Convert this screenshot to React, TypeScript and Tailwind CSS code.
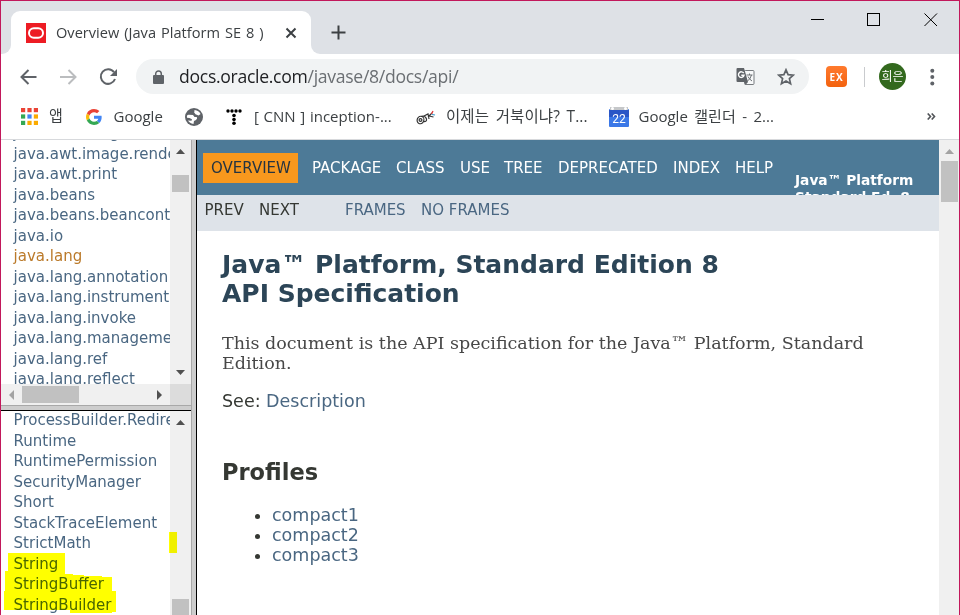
import type { ReactNode } from "react";

const UI = "font-['Open_Sans','Noto_Sans_CJK_KR',sans-serif]";

function Arrow({ dir, color = "#505050" }: { dir: "up" | "down" | "left" | "right"; color?: string }) {
  const d = {
    up: "M0 5 L4.5 0 L9 5Z",
    down: "M0 0 H9 L4.5 5Z",
    left: "M5 0 V10 L0 5Z",
    right: "M0 0 V10 L5 5Z",
  }[dir];
  return (
    <svg width={dir === "up" || dir === "down" ? 9 : 5} height={dir === "up" || dir === "down" ? 5 : 10} className="block shrink-0">
      <path d={d} fill={color} />
    </svg>
  );
}

function TabStrip() {
  return (
    <div className="flex h-[53px] shrink-0 bg-[#dee1e6]">
      <div className="flex w-[10px] items-end bg-white">
        <div className="h-full w-full rounded-br-[9px] bg-[#dee1e6]" />
      </div>
      <div className="flex flex-col bg-[#dee1e6] pt-[10px]">
        <div className="flex h-[43px] w-[300px] items-center rounded-t-[9px] bg-white pl-[15px]">
          <svg width="20" height="20" className="shrink-0">
            <rect width="20" height="20" fill="#ed1c24" />
            <rect x="3" y="5.2" width="14" height="9.6" rx="4.8" fill="none" stroke="#fff" strokeWidth="2" />
          </svg>
          <span className="ml-[10px] w-[220px] whitespace-nowrap text-[14.6px] leading-5 text-[#3c4043] [word-spacing:1.2px] -mt-px">Overview (Java Platform SE 8 )</span>
          <svg width="12" height="12" className="ml-[9px] shrink-0" stroke="#3c4043" strokeWidth="2">
            <path d="M1.5 1.5 L10.5 10.5 M10.5 1.5 L1.5 10.5" />
          </svg>
        </div>
      </div>
      <div className="flex w-[60px] bg-white">
        <div className="flex h-full w-full rounded-bl-[9px] bg-[#dee1e6] pl-[20px] pt-[24px]">
          <svg width="15" height="15" stroke="#3c4043" strokeWidth="2">
            <path d="M7.5 0.5 V14.5 M0.5 7.5 H14.5" />
          </svg>
        </div>
      </div>
      <div className="ml-auto flex pt-[12px] pr-[21px]">
        <svg width="127" height="14" fill="none" stroke="#000" strokeWidth="1">
          <path d="M0 6.5 H13" />
          <rect x="56.5" y="0.5" width="12" height="12" />
          <path d="M113.5 0.5 L126 13 M126 0.5 L113.5 13" />
        </svg>
      </div>
    </div>
  );
}

function Toolbar() {
  return (
    <div className="flex h-[46px] shrink-0 items-center bg-white pb-px pl-[19px]">
      <svg width="17" height="16" fill="none" stroke="#5f6368" strokeWidth="2">
        <path d="M16.5 8 H2 M8.5 1 L1.5 8 L8.5 15" />
      </svg>
      <svg width="17" height="16" fill="none" stroke="#bbbdbf" strokeWidth="2" className="ml-[23px]">
        <path d="M0 8 H15 M8.5 1 L15.5 8 L8.5 15" />
      </svg>
      <svg width="19" height="18" viewBox="0 0 19 18" fill="none" className="ml-[22px]">
        <path d="M15 4.2 A7.3 7.3 0 1 0 16 11" stroke="#5f6368" strokeWidth="2" />
        <path d="M18 1 V8 H11Z" fill="#5f6368" />
      </svg>
      <div className="ml-[18px] flex h-[35px] w-[673px] items-center rounded-full bg-[#f1f3f4] pl-[17px] pr-[14px]">
        <svg width="11" height="14" className="shrink-0">
          <rect y="5" width="11" height="9" rx="1" fill="#5f6368" />
          <path d="M2.7 6 V3.7 a2.8 2.8 0 0 1 5.6 0 V6" fill="none" stroke="#5f6368" strokeWidth="1.5" />
        </svg>
        <span className="-mt-[2px] ml-[15px] whitespace-nowrap text-[17.6px] leading-6 tracking-[-0.3px] text-[#202124]">
          docs.oracle.com<span className="text-[#6b6f73]">/javase/8/docs/api/</span>
        </span>
        <svg width="19" height="19" viewBox="0 0 19 19" className="ml-auto shrink-0">
          <rect x="8.5" y="3.5" width="9.5" height="14" rx="1" fill="#f8f9fa" stroke="#777b7f" />
          <path d="M1.5 1 H8 L12 15 H1.5 Q0.5 15 0.5 14 V2 Q0.5 1 1.5 1Z" fill="#5f6368" />
          <path d="M7.7 6.2 A2.8 2.8 0 1 0 8 8.3 H5.3" fill="none" stroke="#fff" strokeWidth="1.4" />
          <path d="M10.5 8 H16.5 M13.5 6.5 V8 M15.5 8 Q14.5 12 11.5 14 M12 9.5 Q13 12 16 14" fill="none" stroke="#6b6f73" />
          <path d="M8.5 15 H12 L9.5 18Z" fill="#5f6368" />
        </svg>
        <svg width="18" height="18" viewBox="0 0 18 18" className="ml-[22px] shrink-0">
          <path d="M9 1.8 L11.1 6.7 L16.3 7.1 L12.4 10.6 L13.6 15.8 L9 13 L4.4 15.8 L5.6 10.6 L1.7 7.1 L6.9 6.7Z" fill="none" stroke="#5f6368" strokeWidth="1.7" />
        </svg>
      </div>
      <div className="ml-[17px] flex h-[21px] w-[21px] items-center justify-center rounded-[4px] bg-linear-to-b from-[#ff7a2d] to-[#f3620c]">
        <span className="text-[10px] font-bold leading-none tracking-[0.8px] text-white">EX</span>
      </div>
      <div className="ml-[17px] h-[20px] w-px bg-[#c9cbce]" />
      <div className="ml-[14px] flex h-[27px] w-[27px] items-center justify-center rounded-full bg-[#33691e]">
        <span className="whitespace-nowrap text-[12px] leading-none text-white">희은</span>
      </div>
      <svg width="5" height="18" fill="#5f6368" className="ml-[24px]">
        <circle cx="2.3" cy="2.7" r="2" />
        <circle cx="2.3" cy="9" r="2" />
        <circle cx="2.3" cy="15.4" r="2" />
      </svg>
    </div>
  );
}

function Bookmark({ icon, children, className }: { icon: ReactNode; children?: ReactNode; className: string }) {
  return (
    <div className={`flex shrink-0 items-center whitespace-nowrap text-[15px] leading-5 text-[#3c4043] ${className}`}>
      {icon}
      {children}
    </div>
  );
}

const appColors = ["#ea4335", "#ea4335", "#ea4335", "#34a853", "#4285f4", "#fbab00", "#34a853", "#fbab00", "#fbab00"];

function Bookmarks() {
  return (
    <div className="flex h-[40px] shrink-0 items-center border-b border-[#d7d9dc] bg-white pb-[6px] pl-[20px]">
      <Bookmark
        className="w-[65px]"
        icon={
          <svg width="17" height="17">
            {appColors.map((c, i) => (
              <rect key={i} x={(i % 3) * 6.4} y={Math.floor(i / 3) * 6.4} width="4.2" height="4.2" fill={c} />
            ))}
          </svg>
        }
      >
        <span className="-mt-[3px] ml-[11px]">앱</span>
      </Bookmark>
      <Bookmark
        className="w-[99px]"
        icon={
          <svg width="16" height="16" viewBox="0 0 48 48">
            <path fill="#EA4335" d="M24 9.5c3.5 0 6.7 1.2 9.2 3.6l6.9-6.9C35.9 2.4 30.5 0 24 0 14.6 0 6.5 5.4 2.6 13.2l8 6.2C12.4 13.7 17.7 9.5 24 9.5z" />
            <path fill="#4285F4" d="M47 24.6c0-1.6-.2-3.1-.4-4.6H24v9h12.900c-.6 3-2.200 5.500-4.700 7.200l7.700 6C44.400 38 47 31.800 47 24.600z" />
            <path fill="#FBBC05" d="M10.5 28.6c-.5-1.5-.8-3-.8-4.6s.3-3.1.8-4.6l-8-6.2C.9 16.5 0 20.1 0 24s.9 7.5 2.6 10.8l7.9-6.2z" />
            <path fill="#34A853" d="M24 48c6.500 0 11.900-2.100 15.900-5.800l-7.700-6c-2.200 1.500-4.900 2.300-8.200 2.300-6.300 0-11.600-4.200-13.500-9.900l-8 6.200C6.500 42.600 14.600 48 24 48z" />
          </svg>
        }
      >
        <span className="-mt-[2px] ml-[11.5px]">Google</span>
      </Bookmark>
      <Bookmark
        className="w-[41px]"
        icon={
          <svg width="18" height="18" viewBox="0 0 18 18">
            <circle cx="9" cy="9" r="9" fill="#5f6368" />
            <path d="M9.5 1.9 Q14 2.5 15.6 6 L13.5 7.5 L10.5 6.2 L9.3 4.5Z" fill="#fff" />
            <path d="M1.9 8 Q2.5 6.5 4 6.8 L8 7 L9.5 9 H11.8 Q12.8 10.5 11 12 L9 13 L8.5 15.9 Q4.5 15.5 3 12.5 L6.5 12.8 L7 11.3 L4.5 10 L2 9.8Z" fill="#fff" />
          </svg>
        }
      />
      <Bookmark
        className="w-[190px]"
        icon={
          <svg width="16" height="16" fill="#000">
            <circle cx="2" cy="2" r="1.7" />
            <circle cx="6" cy="2" r="1.7" />
            <circle cx="10" cy="2" r="1.7" />
            <circle cx="14" cy="2" r="1.7" />
            <circle cx="8" cy="6.5" r="1.8" />
            <circle cx="8" cy="10.5" r="1.8" />
            <circle cx="8" cy="14.2" r="1.8" />
          </svg>
        }
      >
        <span className="-mt-[2px] ml-[12px] [word-spacing:0.8px]">[ CNN ] inception-...</span>
      </Bookmark>
      <Bookmark
        className="w-[193px]"
        icon={
          <svg width="20" height="16" viewBox="0 0 20 16" fill="none" stroke="#333" strokeWidth="1.2">
            <ellipse cx="4.5" cy="11" rx="3.3" ry="3.8" transform="rotate(25 4.5 11)" />
            <circle cx="4.5" cy="11" r="1.4" />
            <path d="M5 7.5 Q9 6 10.5 10 Q11 13 7.5 12.5 M8 7 L12 5 L13 10 M12 8 L16 4 M13 7 L17.5 8" />
            <path d="M15.5 5 L17 2" stroke="#d33" />
            <path d="M16 5.5 L19 6" stroke="#39c" />
          </svg>
        }
      >
        <span className="-mt-[2px] ml-[10px] text-[15.5px] tracking-[0.1px] [word-spacing:2.5px]">이제는 거북이냐? T...</span>
      </Bookmark>
      <Bookmark
        className="w-[201px]"
        icon={
          <svg width="20" height="20">
            <rect x="0" y="2" width="20" height="18" rx="1" fill="#3b78e7" />
            <path d="M1 0 H19 V3 H1Z" fill="#c5c7c9" />
            <path d="M0 3 H20 V10 H0Z" fill="#2a56c6" />
            <circle cx="3.5" cy="1.5" r="1.5" fill="#fff" />
            <circle cx="16.5" cy="1.5" r="1.5" fill="#fff" />
            <text x="10" y="16" textAnchor="middle" fill="#fff" fontSize="12" fontFamily="Roboto">22</text>
          </svg>
        }
      >
        <span className="-mt-[2px] ml-[9.5px] [word-spacing:2.6px]">Google 캘린더 - 2...</span>
      </Bookmark>
      <svg width="9" height="7" fill="none" stroke="#505357" strokeWidth="1.6" className="ml-[117px]">
        <path d="M0.7 0.5 L3.5 3.5 L0.7 6.5 M4.7 0.5 L7.5 3.5 L4.7 6.5" />
      </svg>
    </div>
  );
}

const packages = [
  "java.awt.image",
  "java.awt.image.renderable",
  "java.awt.print",
  "java.beans",
  "java.beans.beancontext",
  "java.io",
  "java.lang",
  "java.lang.annotation",
  "java.lang.instrument",
  "java.lang.invoke",
  "java.lang.management",
  "java.lang.ref",
  "java.lang.reflect",
];

const classes = [
  "ProcessBuilder.Redirect",
  "Runtime",
  "RuntimePermission",
  "SecurityManager",
  "Short",
  "StackTraceElement",
  "StrictMath",
  "String",
  "StringBuffer",
  "StringBuilder",
];

function Sidebar() {
  return (
    <div className="flex w-[190px] shrink-0 flex-col text-[15px] leading-[20.5px] text-[#4a6782]">
      <div className="flex h-[244px] shrink-0">
        <div className="w-[169px] overflow-hidden">
          <ul className="-mt-[16.7px] whitespace-nowrap pl-[12.6px]">
            {packages.map((p) => (
              <li key={p} className={p === "java.lang" ? "text-[#bb7a2a]" : ""}>{p}</li>
            ))}
          </ul>
        </div>
        <div className="flex w-[21px] flex-col items-center bg-[#f0f0f0] pt-[9px]">
          <Arrow dir="up" />
          <div className="mt-[21px] h-[17px] w-[17px] bg-[#c1c1c1]" />
          <div className="mt-auto pb-[9px]"><Arrow dir="down" /></div>
        </div>
      </div>
      <div className="flex h-[21px] shrink-0 items-center bg-[#f0f0f0] pl-[8px]">
        <Arrow dir="left" color="#a3a3a3" />
        <div className="ml-[8px] mr-[78px] h-[17px] w-[57px] bg-[#c1c1c1]" />
        <Arrow dir="right" />
        <div className="ml-auto h-full w-[21px] bg-[#dcdcdc]" />
      </div>
      <div className="h-[6px] shrink-0 border-b border-t border-b-black border-t-[#a8a8a8] bg-[#cdcdcd]" />
      <div className="relative flex h-[204px] shrink-0">
        <div className="w-[169px] overflow-hidden">
          <ul className="-mt-[0.7px] whitespace-nowrap pl-[12.6px]">
            {classes.map((c) => (
              <li key={c}>{c}</li>
            ))}
          </ul>
        </div>
        <div className="flex w-[21px] flex-col items-center bg-[#f0f0f0] pt-[9px]">
          <Arrow dir="up" />
          <div className="mt-auto h-[16px] w-[17px] bg-[#c1c1c1]" />
        </div>
        {/* highlighter strokes over the String classes */}
        <svg width="190" height="204" className="absolute left-0 top-0 mix-blend-multiply">
          <path d="M7 142 H64 V163 H72 V164 H83 V165 H101 V166 H111 V180 H115 V201 H111 V202 H69 V199 H3 V180 H4 V160 H7Z" fill="#ff0" />
          <rect x="168" y="121" width="8" height="21" fill="#ff0" />
        </svg>
      </div>
    </div>
  );
}

function NavBar() {
  return (
    <>
      <div className="flex h-[55px] shrink-0 overflow-hidden bg-[#4d7a97] pl-[6px] pt-[13px] text-[15px] leading-[30px] text-white">
        <div className="h-[30px] w-[95px] bg-[#f8981d] pl-[8px] text-[#253441]">OVERVIEW</div>
        <div className="ml-[14px] w-[84px]">PACKAGE</div>
        <div className="w-[64px]">CLASS</div>
        <div className="w-[44px]">USE</div>
        <div className="w-[54px]">TREE</div>
        <div className="w-[115px]">DEPRECATED</div>
        <div className="w-[62px]">INDEX</div>
        <div className="w-[60px]">HELP</div>
        <div className="whitespace-nowrap pt-[19px] text-[13.75px] font-bold leading-[17px]">
          Java™ Platform
          <br />
          Standard Ed. 8
        </div>
      </div>
      <div className="flex h-[36px] shrink-0 bg-[#dee3e9] pl-[7.5px] text-[15px] leading-[30px] text-[#353833]">
        <div className="w-[54.5px]">PREV</div>
        <div className="w-[86px]">NEXT</div>
        <div className="w-[76px] text-[#4a6782]">FRAMES</div>
        <div className="text-[#4a6782]">NO FRAMES</div>
      </div>
    </>
  );
}

function MainFrame() {
  return (
    <div className="flex w-[742px] shrink-0 flex-col overflow-hidden bg-white">
      <NavBar />
      <div className="whitespace-nowrap pl-[25px] text-[17.5px] leading-[20px] text-[#353833]">
        <h1 className="mt-[19px] text-[25px] font-bold leading-[29px] text-[#2c4557]">
          Java™ Platform, Standard Edition 8
          <br />
          API Specification
        </h1>
        <p className="mt-[25px] font-['DejaVu_Serif',serif] text-[#474747]">
          This document is the API specification for the Java™ Platform, Standard
          <br />
          Edition.
        </p>
        <p className="mt-[18px]">
          See: <span className="text-[#4a6782]">Description</span>
        </p>
        <h2 className="mt-[47px] text-[22.5px] font-bold leading-[28px]">Profiles</h2>
        <ul className="mt-[19px]">
          {["compact1", "compact2", "compact3"].map((c) => (
            <li key={c} className="flex items-center text-[#4a6782]">
              <span className="ml-[33px] mr-[12px] mt-[3px] h-[5px] w-[5px] rounded-full bg-[#353833]" />
              {c}
            </li>
          ))}
        </ul>
      </div>
    </div>
  );
}

export default function App() {
  return (
    <div className="flex h-[615px] w-[960px] flex-col overflow-hidden border-x border-t border-[#c2185b] bg-white">
      <div className={`flex shrink-0 flex-col ${UI}`}>
        <TabStrip />
        <Toolbar />
        <Bookmarks />
      </div>
      <div className="flex h-[475px] shrink-0 font-['DejaVu_Sans',sans-serif]">
        <Sidebar />
        <div className="w-[6px] shrink-0 border-l border-r border-l-[#a8a8a8] border-r-black bg-[#cdcdcd]" />
        <MainFrame />
        <div className="flex w-[20px] shrink-0 flex-col items-center bg-[#f0f0f0] pt-[9px]">
          <Arrow dir="up" color="#a3a3a3" />
          <div className="mt-[7px] h-[41px] w-[17px] bg-[#c1c1c1]" />
        </div>
      </div>
    </div>
  );
}
